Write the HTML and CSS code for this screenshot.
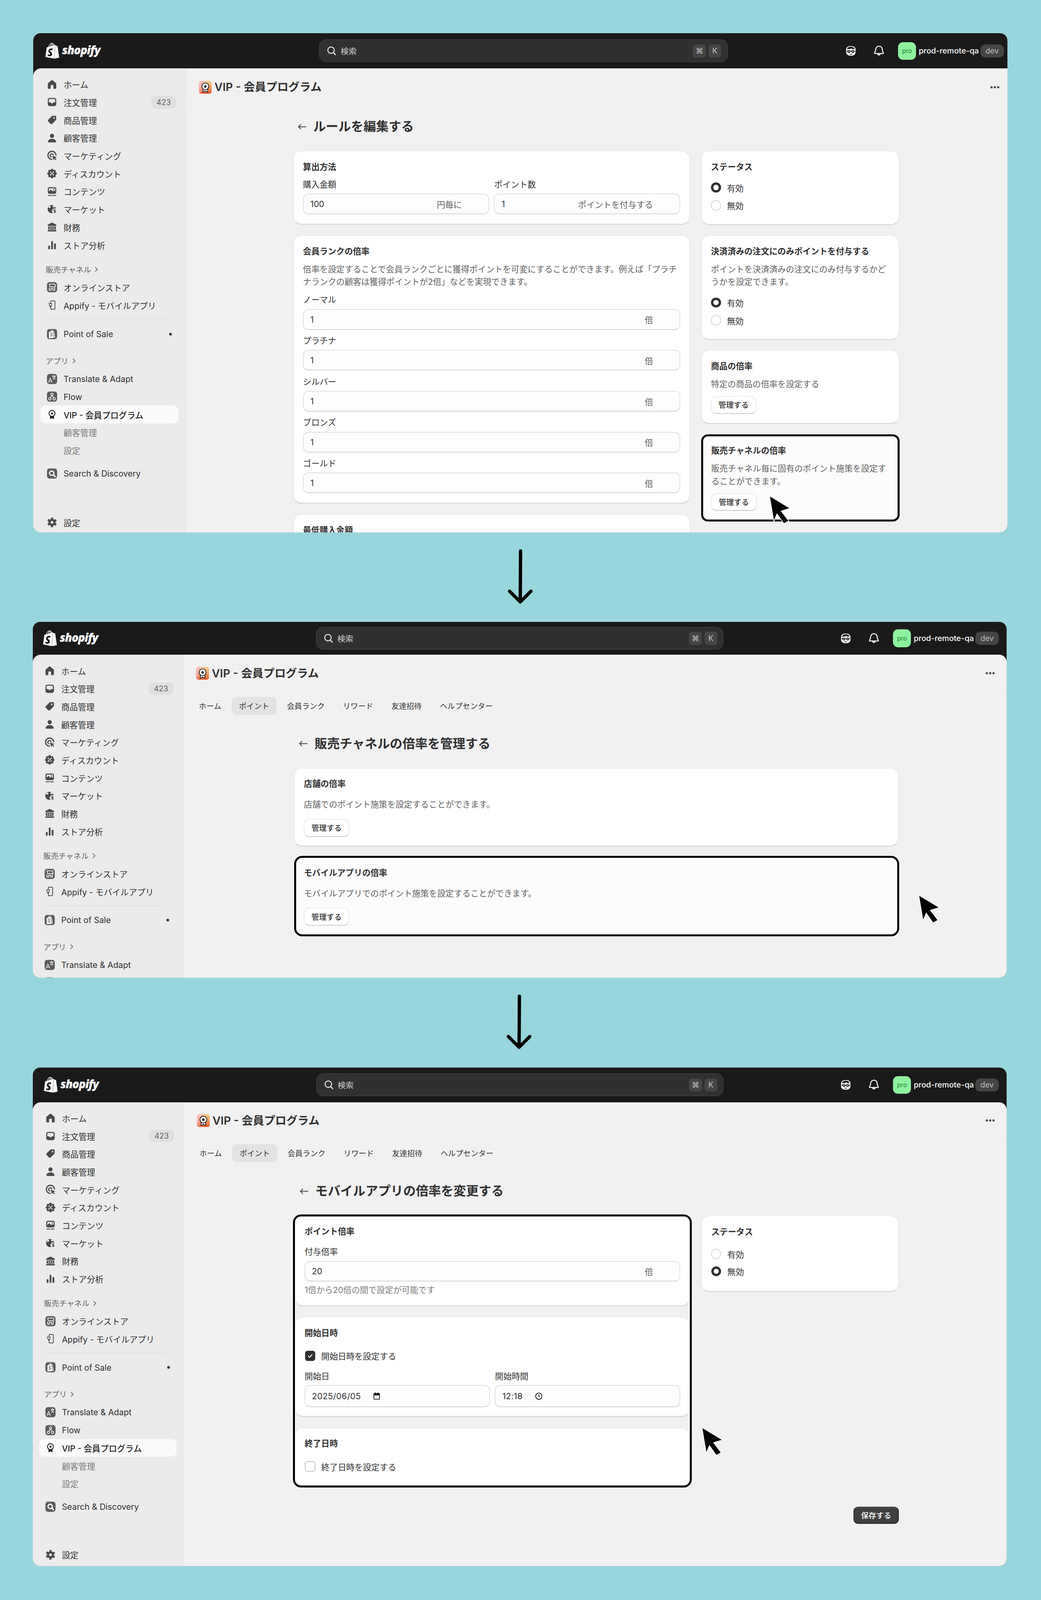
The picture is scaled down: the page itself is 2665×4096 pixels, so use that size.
FILE: index.html
```html
<!DOCTYPE html>
<html lang="ja">
<head>
<meta charset="utf-8">
<title>VIP - 会員プログラム</title>
<link rel="stylesheet" href="styles.css">
</head>
<body>
<svg class="sprite" aria-hidden="true">
  <defs>
    <linearGradient id="vipg" x1="0" y1="0" x2="0" y2="1"><stop offset="0" stop-color="#f9d08c"/><stop offset=".55" stop-color="#f29a5c"/><stop offset="1" stop-color="#e5562a"/></linearGradient>
    <linearGradient id="vipp" x1="0" y1="0" x2="1" y2=".4"><stop offset="0" stop-color="#f9b9d0"/><stop offset=".6" stop-color="#f9b9d0" stop-opacity="0"/></linearGradient>
  </defs>
  <symbol id="i-home" viewBox="0 0 20 20"><path d="M10.900 3.400a1.400 1.400 0 0 0-1.800 0L4 7.700A2 2 0 0 0 3.300 9.200V15a2 2 0 0 0 2 2h1.600a.9.9 0 0 0 .9-.9V13a2.200 2.200 0 0 1 4.400 0v3.100a.9.9 0 0 0 .9.900h1.600a2 2 0 0 0 2-2V9.200a2 2 0 0 0-.7-1.500Z"/></symbol>
  <symbol id="i-orders" viewBox="0 0 20 20"><path fill-rule="evenodd" d="M6.300 3.500h7.400a3 3 0 0 1 3 3v7a3 3 0 0 1-3 3H6.300a3 3 0 0 1-3-3v-7a3 3 0 0 1 3-3ZM5 10.500h2.400c.6 0 1 .4 1.200.9.300.5.800.8 1.400.8s1.100-.3 1.400-.8c.2-.5.600-.9 1.200-.9H15v-4a1.200 1.200 0 0 0-1.200-1.200H6.200A1.200 1.200 0 0 0 5 6.500Z"/></symbol>
  <symbol id="i-tag" viewBox="0 0 20 20"><path fill-rule="evenodd" d="M11 3.400h4.100a1.500 1.500 0 0 1 1.500 1.500V9a2 2 0 0 1-.6 1.400l-5.600 5.600a2 2 0 0 1-2.800 0L4 12.400a2 2 0 0 1 0-2.800L9.600 4a2 2 0 0 1 1.400-.6ZM13.200 8.100a1.300 1.300 0 1 0 0-2.600 1.300 1.300 0 0 0 0 2.600Z"/></symbol>
  <symbol id="i-person" viewBox="0 0 20 20"><circle cx="10" cy="6.600" r="3.300"/><path d="M3.700 16c0-2.800 2.800-4.700 6.300-4.700s6.300 1.900 6.300 4.700c0 .6-.4 1-.9 1H4.600a.9.900 0 0 1-.9-1Z"/></symbol>
  <symbol id="i-target" viewBox="0 0 20 20"><path d="M16.300 9.200A6.400 6.400 0 1 0 9.400 16.100" fill="none" stroke="currentColor" stroke-width="1.900" stroke-linecap="round"/><path d="M12.200 9.600A2.600 2.600 0 1 0 9.200 12.500" fill="none" stroke="currentColor" stroke-width="1.700"/><path d="M10.200 10.200 17.500 12.600 14.900 14 17 16.400 16 17.400 13.700 15 12.500 17.600Z"/></symbol>
  <symbol id="i-discount" viewBox="0 0 20 20"><circle cx="10" cy="10" r="5.800"/><g><circle cx="10" cy="4.500" r="2"/><circle cx="13.900" cy="6.100" r="2"/><circle cx="15.500" cy="10" r="2"/><circle cx="13.900" cy="13.900" r="2"/><circle cx="10" cy="15.500" r="2"/><circle cx="6.100" cy="13.900" r="2"/><circle cx="4.500" cy="10" r="2"/><circle cx="6.100" cy="6.100" r="2"/></g><path d="M12.600 7.400 7.400 12.600" stroke="#ebebeb" stroke-width="1.500" stroke-linecap="round"/><circle cx="7.900" cy="7.900" r="1.100" fill="#ebebeb"/><circle cx="12.100" cy="12.100" r="1.100" fill="#ebebeb"/></symbol>
  <symbol id="i-content" viewBox="0 0 20 20"><rect x="3.300" y="3.300" width="13.400" height="10.400" rx="2.600"/><path d="M5 10V6.200A1.200 1.200 0 0 1 6.200 5h7.600A1.200 1.200 0 0 1 15 6.200V10l-2-1.600-2 1.400-2.900-3Z" fill="#ebebeb"/><circle cx="12.600" cy="6.900" r=".9"/><path d="M4.200 16.300h4.800M11 16.300h4.800" stroke="currentColor" stroke-width="1.400" stroke-linecap="round"/></symbol>
  <symbol id="i-market" viewBox="0 0 20 20"><circle cx="9.500" cy="10" r="6.500"/><path d="M7 4.800c1.500 1 1.200 2.400-.2 3.100C5.500 8.500 4.500 8 4 7.200 4.800 6 5.800 5.200 7 4.800ZM11.500 4c1.500.4 2.700 1.300 3.400 2.500l-2.400 1.200c-1.200-.8-1.800-2.200-1-3.700Z" fill="#ebebeb"/><circle cx="14.300" cy="13.200" r="4.300" fill="#ebebeb"/><path d="M16.100 11.700c-.5-.8-3.100-.9-3.300.3-.2 1.500 3.300 1 3.100 2.500-.2 1.200-2.800 1.100-3.500.2M14.400 10.200v6.200" fill="none" stroke="currentColor" stroke-width="1"/></symbol>
  <symbol id="i-finance" viewBox="0 0 20 20"><path d="M9.300 3.200a1.600 1.600 0 0 1 1.400 0l5.400 2.700c.5.200.7.600.7 1.100V8.100H3.200V7c0-.5.200-.9.700-1.100Z"/><path fill-rule="evenodd" d="M4 9.100h12v4.800H4ZM6.200 10.300v2.400H7.600v-2.400ZM9.300 10.300v2.400h1.400v-2.400ZM12.400 10.300v2.400h1.400v-2.400Z"/><rect x="3.200" y="14.600" width="13.600" height="2.400" rx=".6"/></symbol>
  <symbol id="i-analytics" viewBox="0 0 20 20"><rect x="4" y="10.800" width="2.800" height="6.200" rx="1.400"/><rect x="8.600" y="3.800" width="2.800" height="13.200" rx="1.400"/><rect x="13.200" y="7.400" width="2.800" height="9.600" rx="1.400"/></symbol>
  <symbol id="i-store" viewBox="0 0 20 20"><rect x="2" y="2" width="16" height="16" rx="4"/><path d="M5.600 5.200h8.800l1.100 3.200c0 1.400-1.900 1.700-2.750.6-.8 1.100-2.700 1.100-3.500 0-.8 1.100-2.750.8-2.750-.6Z" fill="none" stroke="#fff" stroke-width="1.100" stroke-linejoin="round"/><path d="M5.700 10.500v4.300h2.700v-2.800h3.200v2.800h2.700v-4.300" fill="none" stroke="#fff" stroke-width="1.100"/></symbol>
  <symbol id="i-phone" viewBox="0 0 20 20"><rect x="7.800" y="3.200" width="6.800" height="13.400" rx="1.300" fill="none" stroke="currentColor" stroke-width="1.200"/><path d="M5.200 7.400H9.800L8.900 11H6ZM5 6.400l.4 1M6.200 12.400h2.500" fill="#ebebeb" stroke="currentColor" stroke-width="1"/></symbol>
  <symbol id="i-pos" viewBox="0 0 20 20"><rect x="2" y="2" width="16" height="16" rx="4"/><path d="M5.200 6.800 12 4.700l1.100.3 1.700 10.700-9.600 .9Z" fill="#fff"/><path d="M7.800 6.200c0-1.700 1-2.500 2-2.500s1.700.8 1.700 2" fill="none" stroke="#fff" stroke-width=".7"/><path d="M12.100 4.700 13 15.900" stroke="#5c5c5c" stroke-width=".7"/><path d="M10.500 8.900c-.6-.8-2.800-.6-2.800.7 0 1.500 2.700 1 2.700 2.600 0 1.200-2.300 1.300-3 .4" fill="none" stroke="#5c5c5c" stroke-width="1"/></symbol>
  <symbol id="i-translate" viewBox="0 0 20 20"><rect x="2" y="2" width="16" height="16" rx="4"/><path d="M4.300 15.700 7.200 8.600l2.900 7.100M5.300 13.400h3.800M10.300 5.600h5.700M13.100 4v1.600M11.300 5.600c.6 2.400 2 4.100 4.200 4.800M15 5.600c-.5 2.300-1.800 4-3.800 4.800" fill="none" stroke="#fff" stroke-width=".9"/></symbol>
  <symbol id="i-flow" viewBox="0 0 20 20"><rect x="2" y="2" width="16" height="16" rx="4"/><path d="M10 8 7.400 12M10 8l2.600 4" stroke="#fff" stroke-width="1"/><circle cx="10" cy="6.400" r="1.800" fill="#5c5c5c" stroke="#fff" stroke-width="1"/><circle cx="6.600" cy="13.500" r="1.800" fill="#5c5c5c" stroke="#fff" stroke-width="1"/><circle cx="13.400" cy="13.500" r="1.800" fill="#5c5c5c" stroke="#fff" stroke-width="1"/></symbol>
  <symbol id="i-vip" viewBox="0 0 20 20"><path d="M6.900 11.500v5.700l3.100-1.700 3.100 1.700v-5.700Z" fill="#1a1a1a"/><circle cx="10" cy="8.200" r="4.700" fill="#fafafa" stroke="#1a1a1a" stroke-width="1.300"/><path d="m10 6 .7 1.500 1.600.2-1.200 1.100.3 1.600-1.400-.8-1.400.8.300-1.600-1.200-1.100 1.600-.2Z" fill="#1a1a1a"/></symbol>
  <symbol id="i-searchapp" viewBox="0 0 20 20"><rect x="2" y="2" width="16" height="16" rx="4"/><circle cx="9.500" cy="9.500" r="3.400" fill="none" stroke="#fff" stroke-width="1.900"/><path d="m12.100 12.100 2.800 2.800" stroke="#fff" stroke-width="2" stroke-linecap="round"/></symbol>
  <symbol id="i-gear" viewBox="0 0 20 20"><circle cx="10" cy="10" r="5.600"/><circle cx="10" cy="10" r="6" fill="none" stroke="currentColor" stroke-width="3.200" stroke-dasharray="3.300 2.983" stroke-dashoffset="1.650" transform="rotate(-90 10 10)"/><circle cx="10" cy="10" r="2.100" fill="#ebebeb"/></symbol>
  <symbol id="i-vipapp" viewBox="0 0 40 40"><rect width="40" height="40" rx="8" fill="url(#vipg)"/><rect width="40" height="40" rx="8" fill="url(#vipp)"/><path d="M13 23v12l7-3.500 7 3.500V23Z" fill="#fff" stroke="#111" stroke-width="2"/><circle cx="20" cy="17" r="10.500" fill="#fff" stroke="#111" stroke-width="2.200"/><path d="m20 11.500 1.700 3.500 3.800.5-2.800 2.600.7 3.800-3.400-1.800-3.400 1.800.7-3.800-2.800-2.600 3.800-.5Z" fill="#111"/></symbol>
  <symbol id="i-shopify" viewBox="0 0 24 24"><path d="M15.337 23.979l7.216-1.561s-2.604-17.613-2.625-17.73c-.018-.116-.114-.192-.211-.192s-1.929-.136-1.929-.136-1.275-1.274-1.439-1.411c-.045-.037-.075-.057-.121-.074l-.914 21.104h.023zM11.71 11.305s-.81-.424-1.774-.424c-1.447 0-1.504.906-1.504 1.141 0 1.232 3.24 1.715 3.24 4.629 0 2.295-1.44 3.76-3.406 3.76-2.354 0-3.54-1.465-3.54-1.465l.646-2.086s1.245 1.066 2.28 1.066c.675 0 .975-.545.975-.932 0-1.619-2.654-1.694-2.654-4.359-.034-2.237 1.571-4.416 4.827-4.416 1.257 0 1.875.361 1.875.361l-.945 2.715-.02.01zM11.17.83c.136 0 .271.038.405.135-.984.465-2.064 1.639-2.508 3.992-.656.213-1.293.405-1.889.578C7.697 3.75 8.951.84 11.17.84V.83zm1.235 2.949v.135c-.754.232-1.583.484-2.394.736.466-1.777 1.333-2.645 2.085-2.971.193.501.309 1.176.309 2.1zm.539-2.234c.694.074 1.141.867 1.429 1.755-.349.114-.735.231-1.158.366v-.252c0-.752-.096-1.371-.271-1.871v.002zm2.992 1.289c-.02 0-.06.021-.078.021s-.289.075-.714.21c-.423-1.233-1.176-2.37-2.508-2.37h-.115C12.135.209 11.669 0 11.265 0 8.159 0 6.675 3.877 6.21 5.846c-1.194.365-2.063.636-2.16.674-.675.213-.694.232-.772.87-.075.462-1.83 14.063-1.83 14.063L15.009 24l.927-21.166z"/></symbol>
  <symbol id="i-find" viewBox="0 0 20 20"><circle cx="9" cy="9" r="6.500" fill="none" stroke="currentColor" stroke-width="2"/><path d="m13.700 13.700 4 4.300" stroke="currentColor" stroke-width="2.200" stroke-linecap="round"/></symbol>
  <symbol id="i-face" viewBox="0 0 20 20"><rect x="2.500" y="2.500" width="15" height="15" rx="5.500" fill="#fff"/><path d="M3.500 9c0-4 2-6 6.500-6s6.500 2 6.500 6l-2-1.600-2 .8-1.500-1.700-2.500 1.400-2.500-.5Z" fill="#1a1a1a" stroke="#fff" stroke-width=".9"/><path d="M3 10.400h14" stroke="#1a1a1a" stroke-width="1"/><circle cx="7" cy="11" r="2.200" fill="#1a1a1a"/><circle cx="13" cy="11" r="2.200" fill="#1a1a1a"/><circle cx="7" cy="11" r=".9" fill="#fff"/><circle cx="13" cy="11" r=".9" fill="#fff"/><path d="M8 14.700c1.200.9 2.800.9 4 0" fill="none" stroke="#1a1a1a" stroke-width="1"/></symbol>
  <symbol id="i-bell" viewBox="0 0 20 20"><path d="M10 2.600a5.200 5.200 0 0 0-5.200 5.200c0 3.400-1.600 4.600-1.800 5.300-.2.600.2 1.100.8 1.100h12.400c.6 0 1-.5.8-1.100-.2-.7-1.800-1.900-1.800-5.300A5.200 5.200 0 0 0 10 2.600Z" fill="none" stroke="currentColor" stroke-width="1.500" stroke-linejoin="round"/><path d="M8.200 14.500c0 2.700 3.600 2.700 3.600 0" fill="none" stroke="currentColor" stroke-width="1.500"/></symbol>
  <symbol id="i-back" viewBox="0 0 28 20"><path d="M26 10H3.500M10.500 3 3.500 10l7 7" fill="none" stroke="currentColor" stroke-width="2.600" stroke-linecap="round" stroke-linejoin="round"/></symbol>
  <symbol id="i-chev" viewBox="0 0 12 18"><path d="m2.500 3 6 6-6 6" fill="none" stroke="currentColor" stroke-width="2.200" stroke-linecap="round" stroke-linejoin="round"/></symbol>
  <symbol id="i-cal" viewBox="0 0 22 22"><path fill-rule="evenodd" d="M3 2h16a1.500 1.500 0 0 1 1.500 1.500v16A1.500 1.500 0 0 1 19 21H3a1.500 1.500 0 0 1-1.500-1.500v-16A1.500 1.500 0 0 1 3 2Zm.5 6.500v10.500h15V8.500Z"/><path d="M6 0h2.400v3H6zM13.600 0H16v3h-2.400z"/></symbol>
  <symbol id="i-clock" viewBox="0 0 22 22"><circle cx="11" cy="11" r="9.500" fill="none" stroke="currentColor" stroke-width="2.200"/><path d="M11 5.500V11l4 2.500" fill="none" stroke="currentColor" stroke-width="2.200"/></symbol>
  <symbol id="i-check" viewBox="0 0 20 20"><path d="m5.500 10.500 3 3 6-7" fill="none" stroke="#fff" stroke-width="2.200" stroke-linecap="round" stroke-linejoin="round"/></symbol>
  <symbol id="i-cursor" viewBox="-6 -6 72 92"><path d="M0 0 58 35 32 43 55 73 42 80 21 50 12 71Z" fill="#000" stroke="#fff" stroke-width="4" stroke-linejoin="miter" paint-order="stroke"/></symbol>
  <symbol id="i-arrow" viewBox="0 0 84 168"><path d="M43 5 42 158M10 126l32 32 32-32" fill="none" stroke="#000" stroke-width="10" stroke-linecap="round" stroke-linejoin="round"/></symbol>
</svg>

<div class="page">

<!-- ============ 1 ============ -->
<section class="win win--a">
  <header class="topbar">
    <div class="logo"><svg class="logo-bag"><use href="#i-shopify"/></svg><span class="logo-word">shopify</span></div>
    <div class="search"><svg class="search-ico"><use href="#i-find"/></svg><span class="search-text">検索</span><span class="kbd">⌘</span><span class="kbd">K</span></div>
    <div class="actions"><svg class="act-face"><use href="#i-face"/></svg><svg class="act-bell"><use href="#i-bell"/></svg><span class="pro">pro</span><span class="shop-name">prod-remote-qa</span><span class="dev">dev</span></div>
  </header>
  <div class="body">
    <nav class="side">
      <a class="row"><svg class="ico"><use href="#i-home"/></svg>ホーム</a>
      <a class="row"><svg class="ico"><use href="#i-orders"/></svg>注文管理<span class="count">423</span></a>
      <a class="row"><svg class="ico"><use href="#i-tag"/></svg>商品管理</a>
      <a class="row"><svg class="ico"><use href="#i-person"/></svg>顧客管理</a>
      <a class="row"><svg class="ico"><use href="#i-target"/></svg>マーケティング</a>
      <a class="row"><svg class="ico"><use href="#i-discount"/></svg>ディスカウント</a>
      <a class="row"><svg class="ico"><use href="#i-content"/></svg>コンテンツ</a>
      <a class="row"><svg class="ico"><use href="#i-market"/></svg>マーケット</a>
      <a class="row"><svg class="ico"><use href="#i-finance"/></svg>財務</a>
      <a class="row"><svg class="ico"><use href="#i-analytics"/></svg>ストア分析</a>
      <div class="side-head side-head--first">販売チャネル<svg class="chev"><use href="#i-chev"/></svg></div>
      <a class="row"><svg class="ico ico--app"><use href="#i-store"/></svg>オンラインストア</a>
      <a class="row"><svg class="ico"><use href="#i-phone"/></svg>Appify - モバイルアプリ</a>
      <hr class="side-rule">
      <a class="row"><svg class="ico ico--app"><use href="#i-pos"/></svg>Point of Sale<span class="pin"></span></a>
      <div class="side-head side-head--apps">アプリ<svg class="chev"><use href="#i-chev"/></svg></div>
      <a class="row"><svg class="ico ico--app"><use href="#i-translate"/></svg>Translate &amp; Adapt</a>
      <a class="row"><svg class="ico ico--app"><use href="#i-flow"/></svg>Flow</a>
      <a class="row row--on"><svg class="ico"><use href="#i-vip"/></svg>VIP - 会員プログラム</a>
      <a class="row row--sub">顧客管理</a>
      <a class="row row--sub">設定</a>
      <a class="row row--search"><svg class="ico ico--app"><use href="#i-searchapp"/></svg>Search &amp; Discovery</a>
      <a class="row row--settings"><svg class="ico"><use href="#i-gear"/></svg>設定</a>
    </nav>
    <main class="main">
      <div class="apphead"><svg class="vip"><use href="#i-vipapp"/></svg><h1 class="app-title">VIP - 会員プログラム</h1><svg class="more" viewBox="0 0 28 8"><circle cx="4" cy="4" r="3.300"/><circle cx="14" cy="4" r="3.300"/><circle cx="24" cy="4" r="3.300"/></svg></div>
      <div class="pagehead"><svg class="back"><use href="#i-back"/></svg><h2 class="page-title">ルールを編集する</h2></div>
      <div class="cols">
        <div class="col-l">
          <section class="card">
            <h3 class="card-title">算出方法</h3>
            <div class="pair">
              <div class="field"><label class="lbl">購入金額</label><div class="input">100<span class="suf">円毎に</span></div></div>
              <div class="field"><label class="lbl">ポイント数</label><div class="input">1<span class="suf">ポイントを付与する</span></div></div>
            </div>
          </section>
          <section class="card">
            <h3 class="card-title">会員ランクの倍率</h3>
            <p class="desc">倍率を設定することで会員ランクごとに獲得ポイントを可変にすることができます。例えば「プラチナランクの顧客は獲得ポイントが2倍」などを実現できます。</p>
            <div class="field field--rank"><label class="lbl">ノーマル</label><div class="input">1<span class="suf">倍</span></div></div>
            <div class="field field--rank"><label class="lbl">プラチナ</label><div class="input">1<span class="suf">倍</span></div></div>
            <div class="field field--rank"><label class="lbl">シルバー</label><div class="input">1<span class="suf">倍</span></div></div>
            <div class="field field--rank"><label class="lbl">ブロンズ</label><div class="input">1<span class="suf">倍</span></div></div>
            <div class="field field--rank"><label class="lbl">ゴールド</label><div class="input">1<span class="suf">倍</span></div></div>
          </section>
          <section class="card"><h3 class="card-title">最低購入金額</h3></section>
        </div>
        <div class="col-r">
          <section class="card">
            <h3 class="card-title">ステータス</h3>
            <div class="radios">
              <div class="radio"><span class="dot dot--on"></span>有効</div>
              <div class="radio"><span class="dot"></span>無効</div>
            </div>
          </section>
          <section class="card">
            <h3 class="card-title">決済済みの注文にのみポイントを付与する</h3>
            <p class="desc">ポイントを決済済みの注文にのみ付与するかどうかを設定できます。</p>
            <div class="radios">
              <div class="radio"><span class="dot dot--on"></span>有効</div>
              <div class="radio"><span class="dot"></span>無効</div>
            </div>
          </section>
          <section class="card">
            <h3 class="card-title">商品の倍率</h3>
            <p class="desc">特定の商品の倍率を設定する</p>
            <button class="btn">管理する</button>
          </section>
          <section class="card card--hl">
            <h3 class="card-title">販売チャネルの倍率</h3>
            <p class="desc">販売チャネル毎に固有のポイント施策を設定することができます。</p>
            <button class="btn">管理する</button>
          </section>
        </div>
      </div>
    </main>
  </div>
  <svg class="cursor"><use href="#i-cursor"/></svg>
</section>

<div class="flow-arrow"><svg class="arrow"><use href="#i-arrow"/></svg></div>

<!-- ============ 2 ============ -->
<section class="win win--b">
  <header class="topbar">
    <div class="logo"><svg class="logo-bag"><use href="#i-shopify"/></svg><span class="logo-word">shopify</span></div>
    <div class="search"><svg class="search-ico"><use href="#i-find"/></svg><span class="search-text">検索</span><span class="kbd">⌘</span><span class="kbd">K</span></div>
    <div class="actions"><svg class="act-face"><use href="#i-face"/></svg><svg class="act-bell"><use href="#i-bell"/></svg><span class="pro">pro</span><span class="shop-name">prod-remote-qa</span><span class="dev">dev</span></div>
  </header>
  <div class="body">
    <nav class="side">
      <a class="row"><svg class="ico"><use href="#i-home"/></svg>ホーム</a>
      <a class="row"><svg class="ico"><use href="#i-orders"/></svg>注文管理<span class="count">423</span></a>
      <a class="row"><svg class="ico"><use href="#i-tag"/></svg>商品管理</a>
      <a class="row"><svg class="ico"><use href="#i-person"/></svg>顧客管理</a>
      <a class="row"><svg class="ico"><use href="#i-target"/></svg>マーケティング</a>
      <a class="row"><svg class="ico"><use href="#i-discount"/></svg>ディスカウント</a>
      <a class="row"><svg class="ico"><use href="#i-content"/></svg>コンテンツ</a>
      <a class="row"><svg class="ico"><use href="#i-market"/></svg>マーケット</a>
      <a class="row"><svg class="ico"><use href="#i-finance"/></svg>財務</a>
      <a class="row"><svg class="ico"><use href="#i-analytics"/></svg>ストア分析</a>
      <div class="side-head side-head--first">販売チャネル<svg class="chev"><use href="#i-chev"/></svg></div>
      <a class="row"><svg class="ico ico--app"><use href="#i-store"/></svg>オンラインストア</a>
      <a class="row"><svg class="ico"><use href="#i-phone"/></svg>Appify - モバイルアプリ</a>
      <hr class="side-rule">
      <a class="row"><svg class="ico ico--app"><use href="#i-pos"/></svg>Point of Sale<span class="pin"></span></a>
      <div class="side-head side-head--apps">アプリ<svg class="chev"><use href="#i-chev"/></svg></div>
      <a class="row"><svg class="ico ico--app"><use href="#i-translate"/></svg>Translate &amp; Adapt</a>
      <a class="row"><svg class="ico ico--app"><use href="#i-flow"/></svg></a>
    </nav>
    <main class="main">
      <div class="apphead"><svg class="vip"><use href="#i-vipapp"/></svg><h1 class="app-title">VIP - 会員プログラム</h1><svg class="more" viewBox="0 0 28 8"><circle cx="4" cy="4" r="3.300"/><circle cx="14" cy="4" r="3.300"/><circle cx="24" cy="4" r="3.300"/></svg></div>
      <div class="tabs"><a class="tab">ホーム</a><a class="tab tab--on">ポイント</a><a class="tab">会員ランク</a><a class="tab">リワード</a><a class="tab">友達招待</a><a class="tab">ヘルプセンター</a></div>
      <div class="pagehead"><svg class="back"><use href="#i-back"/></svg><h2 class="page-title">販売チャネルの倍率を管理する</h2></div>
      <div class="wide-stack">
        <section class="card card--wide">
          <h3 class="card-title">店舗の倍率</h3>
          <p class="desc">店舗でのポイント施策を設定することができます。</p>
          <button class="btn">管理する</button>
        </section>
        <section class="card card--wide card--hl">
          <h3 class="card-title">モバイルアプリの倍率</h3>
          <p class="desc">モバイルアプリでのポイント施策を設定することができます。</p>
          <button class="btn">管理する</button>
        </section>
      </div>
    </main>
  </div>
  <svg class="cursor"><use href="#i-cursor"/></svg>
</section>

<div class="flow-arrow flow-arrow--second"><svg class="arrow"><use href="#i-arrow"/></svg></div>

<!-- ============ 3 ============ -->
<section class="win win--c">
  <header class="topbar">
    <div class="logo"><svg class="logo-bag"><use href="#i-shopify"/></svg><span class="logo-word">shopify</span></div>
    <div class="search"><svg class="search-ico"><use href="#i-find"/></svg><span class="search-text">検索</span><span class="kbd">⌘</span><span class="kbd">K</span></div>
    <div class="actions"><svg class="act-face"><use href="#i-face"/></svg><svg class="act-bell"><use href="#i-bell"/></svg><span class="pro">pro</span><span class="shop-name">prod-remote-qa</span><span class="dev">dev</span></div>
  </header>
  <div class="body">
    <nav class="side">
      <a class="row"><svg class="ico"><use href="#i-home"/></svg>ホーム</a>
      <a class="row"><svg class="ico"><use href="#i-orders"/></svg>注文管理<span class="count">423</span></a>
      <a class="row"><svg class="ico"><use href="#i-tag"/></svg>商品管理</a>
      <a class="row"><svg class="ico"><use href="#i-person"/></svg>顧客管理</a>
      <a class="row"><svg class="ico"><use href="#i-target"/></svg>マーケティング</a>
      <a class="row"><svg class="ico"><use href="#i-discount"/></svg>ディスカウント</a>
      <a class="row"><svg class="ico"><use href="#i-content"/></svg>コンテンツ</a>
      <a class="row"><svg class="ico"><use href="#i-market"/></svg>マーケット</a>
      <a class="row"><svg class="ico"><use href="#i-finance"/></svg>財務</a>
      <a class="row"><svg class="ico"><use href="#i-analytics"/></svg>ストア分析</a>
      <div class="side-head side-head--first">販売チャネル<svg class="chev"><use href="#i-chev"/></svg></div>
      <a class="row"><svg class="ico ico--app"><use href="#i-store"/></svg>オンラインストア</a>
      <a class="row"><svg class="ico"><use href="#i-phone"/></svg>Appify - モバイルアプリ</a>
      <hr class="side-rule">
      <a class="row"><svg class="ico ico--app"><use href="#i-pos"/></svg>Point of Sale<span class="pin"></span></a>
      <div class="side-head side-head--apps">アプリ<svg class="chev"><use href="#i-chev"/></svg></div>
      <a class="row"><svg class="ico ico--app"><use href="#i-translate"/></svg>Translate &amp; Adapt</a>
      <a class="row"><svg class="ico ico--app"><use href="#i-flow"/></svg>Flow</a>
      <a class="row row--on"><svg class="ico"><use href="#i-vip"/></svg>VIP - 会員プログラム</a>
      <a class="row row--sub">顧客管理</a>
      <a class="row row--sub">設定</a>
      <a class="row row--search"><svg class="ico ico--app"><use href="#i-searchapp"/></svg>Search &amp; Discovery</a>
      <a class="row row--settings"><svg class="ico"><use href="#i-gear"/></svg>設定</a>
    </nav>
    <main class="main">
      <div class="apphead"><svg class="vip"><use href="#i-vipapp"/></svg><h1 class="app-title">VIP - 会員プログラム</h1><svg class="more" viewBox="0 0 28 8"><circle cx="4" cy="4" r="3.300"/><circle cx="14" cy="4" r="3.300"/><circle cx="24" cy="4" r="3.300"/></svg></div>
      <div class="tabs"><a class="tab">ホーム</a><a class="tab tab--on">ポイント</a><a class="tab">会員ランク</a><a class="tab">リワード</a><a class="tab">友達招待</a><a class="tab">ヘルプセンター</a></div>
      <div class="pagehead"><svg class="back"><use href="#i-back"/></svg><h2 class="page-title">モバイルアプリの倍率を変更する</h2></div>
      <div class="cols">
        <div class="col-l">
          <div class="hlbox">
            <section class="card card--a">
              <h3 class="card-title">ポイント倍率</h3>
              <div class="field field--gap"><label class="lbl">付与倍率</label><div class="input input--60">20<span class="suf">倍</span></div></div>
              <p class="help">1倍から20倍の間で設定が可能です</p>
            </section>
            <section class="card card--b">
              <h3 class="card-title">開始日時</h3>
              <div class="checkrow"><span class="cbx cbx--on"><svg class="tick"><use href="#i-check"/></svg></span>開始日時を設定する</div>
              <div class="pair pair--dates">
                <div class="field"><label class="lbl">開始日</label><div class="input input--64">2025/06/05<svg class="picker"><use href="#i-cal"/></svg></div></div>
                <div class="field"><label class="lbl">開始時間</label><div class="input input--64">12:18<svg class="picker picker--time"><use href="#i-clock"/></svg></div></div>
              </div>
            </section>
            <section class="card card--c">
              <h3 class="card-title">終了日時</h3>
              <div class="checkrow"><span class="cbx"></span>終了日時を設定する</div>
            </section>
          </div>
        </div>
        <div class="col-r">
          <section class="card card--status">
            <h3 class="card-title">ステータス</h3>
            <div class="radios">
              <div class="radio"><span class="dot"></span>有効</div>
              <div class="radio"><span class="dot dot--on"></span>無効</div>
            </div>
          </section>
        </div>
      </div>
      <div class="savebar"><button class="btn-save">保存する</button></div>
    </main>
  </div>
  <svg class="cursor"><use href="#i-cursor"/></svg>
</section>

</div>
</body>
</html>
```
FILE: styles.css
```css
html, body { margin: 0; padding: 0; background: #99d5dc; }
.sprite { position: absolute; width: 0; height: 0; overflow: hidden; }
.page {
  zoom: 0.854;
  width: 3120px;
  height: 4796px;
  padding-top: 100px;
  box-sizing: border-box;
  background: #99d5dc;
  font-family: Inter, "Noto Sans CJK JP", sans-serif;
  font-size: 25px;
  color: #303030;
  overflow: hidden;
}
h1, h2, h3, p { margin: 0; }
button { font-family: inherit; }
svg { display: block; flex: none; }

/* windows */
.win {
  position: relative;
  width: 2920px;
  border-radius: 22px;
  background: #1a1a1a;
  overflow: hidden;
  display: flex;
  flex-direction: column;
}
.win--a {
  margin-left: 100px; height: 1496px;
  --bar: 105px; --logo-l: 37px; --search-l: 857px; --search-w: 1224px; --act-r: 11px; --side-w: 458px;
  --nav-top: 21px; --nav-l: 22px; --body-tr: 0; --row-l: 15px; --nav-bottom: 3px; --more-r: 24px;
}
.win--b {
  margin-left: 98px; height: 1067px;
  --bar: 99px; --logo-l: 32px; --search-l: 849px; --search-w: 1222px; --act-r: 24px; --side-w: 452px;
  --nav-top: 21px; --nav-l: 17px; --body-tr: 22px; --row-l: 15px; --nav-bottom: 0px; --more-r: 36px;
}
.win--c {
  margin-left: 98px; height: 1495px;
  --bar: 104px; --logo-l: 34px; --search-l: 850px; --search-w: 1221px; --act-r: 24px; --side-w: 454px;
  --nav-top: 21px; --nav-l: 19px; --body-tr: 22px; --row-l: 15px; --nav-bottom: 8px; --more-r: 36px;
}

/* flow arrows between windows */
.flow-arrow { height: 268px; display: flex; align-items: center; justify-content: center; }
.flow-arrow--second { height: 269px; padding-right: 8px; }
.arrow { width: 84px; height: 168px; }

/* top bar */
.topbar {
  height: var(--bar);
  flex: none;
  display: flex;
  align-items: center;
  padding-left: var(--logo-l);
  padding-right: var(--act-r);
  position: relative;
}
.logo { display: flex; align-items: center; gap: 5px; width: 164px; flex: none; color: #fff; }
.logo-bag { width: 47px; height: 47px; fill: #fff; margin-left: -3px; }
.logo-word {
  font-family: "Open Sans", sans-serif;
  font-style: italic;
  font-weight: 800;
  font-size: 34.500px;
  line-height: 40px;
  letter-spacing: -1.500px;
  padding-bottom: 5px;
}
.search {
  position: absolute;
  left: var(--search-l);
  width: var(--search-w);
  height: 68px;
  box-sizing: border-box;
  display: flex;
  align-items: center;
  gap: 8px;
  padding: 0 18px 0 21px;
  background: #303030;
  border: 2px solid #4a4a4a;
  border-radius: 21px;
  color: #d0d0d0;
  font-size: 24px;
}
.search-ico { width: 30px; height: 30px; color: #e3e3e3; }
.search-text { margin-right: auto; padding-left: 4px; }
.kbd {
  width: 38px; height: 39px;
  border-radius: 8px;
  background: #454545;
  color: #c4c4c4;
  display: flex; align-items: center; justify-content: center;
  font-size: 23px;
}
.actions { margin-left: auto; display: flex; align-items: center; color: #fff; }
.act-face { width: 38px; height: 38px; margin-right: 47px; }
.act-bell { width: 38px; height: 38px; margin-right: 38px; color: #fff; }
.pro {
  width: 54px; height: 53px;
  border-radius: 15px;
  background: #8df29d;
  color: #1f7a3c;
  font-size: 19px;
  display: flex; align-items: center; justify-content: center;
  margin-right: 8px;
}
.shop-name { width: 176px; font-size: 23.500px; font-weight: 500; white-space: nowrap; margin-right: 9px; }
.dev {
  width: 70px; height: 39px;
  border-radius: 14px;
  background: #454545;
  color: #bdbdbd;
  font-size: 23px;
  display: flex; align-items: center; justify-content: center;
}

/* body */
.body {
  flex: 1;
  min-height: 0;
  display: flex;
  background: #f1f1f1;
  border-radius: 24px var(--body-tr) 0 0;
  overflow: hidden;
}

/* sidebar */
.side {
  width: var(--side-w);
  flex: none;
  box-sizing: border-box;
  background: #ebebeb;
  padding: var(--nav-top) 23px var(--nav-bottom) var(--nav-l);
  display: flex;
  flex-direction: column;
  overflow: hidden;
}
.row {
  height: 53.500px;
  flex: none;
  display: flex;
  align-items: center;
  gap: 15.500px;
  padding: 0 7px 0 var(--row-l);
  border-radius: 16px;
  white-space: nowrap;
  color: #303030;
}
.ico { width: 38px; height: 38px; fill: #4a4a4a; color: #4a4a4a; }
.ico--app { fill: #5c5c5c; }
.count {
  margin-left: auto;
  width: 75px; height: 38px;
  border-radius: 14px;
  background: #e0e0e0;
  color: #616161;
  font-size: 23px;
  display: flex; align-items: center; justify-content: center;
}
.pin { margin-left: auto; margin-right: 13px; width: 8px; height: 8px; border-radius: 50%; background: #303030; }
.side-head {
  height: 53.500px;
  flex: none;
  display: flex;
  align-items: center;
  gap: 11px;
  padding-left: var(--row-l);
  color: #616161;
  font-size: 22.700px;
}
.side-head--first { margin-top: 20px; }
.side-head--apps { margin-top: 27px; }
.chev { width: 12px; height: 18px; color: #616161; }
.side-rule { border: 0; height: 2px; background: #e1e1e1; margin: 15px 10px 15px var(--row-l); flex: none; width: 365px; }
.win--a .side-rule { margin-bottom: 16.500px; }
.row--on { background: #fafafa; font-weight: 500; color: #1f1f1f; }
.row--sub { padding-left: calc(var(--row-l) + 53.500px); color: #7a7a7a; }
.row--search { margin-top: 16px; }
.row--settings { margin-top: auto; }

/* main */
.main { flex: 1; min-width: 0; display: flex; flex-direction: column; }
.apphead {
  height: 108px;
  flex: none;
  box-sizing: border-box;
  display: flex;
  align-items: center;
  border-bottom: 2px solid #e8e8e8;
  padding: 6px var(--more-r) 0 38px;
}
.win--b .apphead, .win--c .apphead { padding-top: 4px; }
.vip { width: 39px; height: 39px; margin-right: 8px; }
.app-title { font-size: 33.500px; font-weight: 600; line-height: 44px; color: #303030; white-space: nowrap; }
.more { width: 28px; height: 8px; margin-left: auto; fill: #4a4a4a; }

.tabs { display: flex; gap: 10.500px; margin-top: 18px; padding-left: 24px; height: 53.600px; flex: none; font-size: 22.700px; }
.tab { padding: 0 22px; border-radius: 14px; display: flex; align-items: center; white-space: nowrap; color: #303030; }
.tab--on { background: #e3e3e3; padding: 0 22.500px; margin: 0 -2px; }

.pagehead { display: flex; align-items: center; height: 50px; flex: none; margin-top: 42px; margin-bottom: 47px; }
.win--a .pagehead { padding-left: 333px; }
.win--b .pagehead { margin-top: 62px; margin-bottom: 48px; padding-left: 345px; }
.win--c .pagehead { margin-top: 62px; margin-bottom: 45px; padding-left: 345px; }
.back { width: 28px; height: 20px; color: #4a4a4a; margin-right: 20px; }
.page-title { font-size: 37.700px; font-weight: 600; line-height: 50px; color: #303030; white-space: nowrap; }

.cols { display: flex; align-items: flex-start; gap: 34px; flex: none; }
.win--a .cols { margin-left: 321px; }
.win--c .cols { margin-left: 326px; gap: 28px; }
.col-l { width: 1189px; display: flex; flex-direction: column; gap: 32.500px; flex: none; }
.win--c .col-l { width: 1196px; }
.col-r { width: 594px; display: flex; flex-direction: column; gap: 32px; flex: none; }
.win--c .col-r { width: 592px; padding-top: 3.500px; }

/* cards */
.card {
  box-sizing: border-box;
  background: #fff;
  border: 2px solid #e3e3e3;
  border-bottom-color: #c9c9c9;
  border-radius: 24px;
  box-shadow: 0 2px 3px rgba(0, 0, 0, .06);
  padding: 29px 28px;
  position: relative;
}
.card-title { font-size: 25px; font-weight: 600; line-height: 36px; color: #303030; white-space: nowrap; }
.desc { margin-top: 17px; line-height: 38px; color: #616161; }
.lbl { display: block; line-height: 36px; color: #303030; }
.input {
  margin-top: 10px;
  height: 61px;
  box-sizing: border-box;
  display: flex;
  align-items: center;
  padding: 0 80px 0 21px;
  background: #fdfdfd;
  border: 2px solid #c6c6c6;
  border-bottom-color: #adadad;
  border-radius: 16px;
  color: #303030;
}
.suf { margin-left: auto; color: #616161; }
.pair { display: flex; gap: 16px; margin-top: 17px; }
.pair .field { flex: 1 1 0; min-width: 0; }
.field--rank { margin-top: 15.600px; }
.desc + .field--rank { margin-top: 17px; }
.radios { margin-top: 26px; margin-bottom: 9px; display: flex; flex-direction: column; gap: 17.500px; }
.desc + .radios { margin-top: 25px; }
.radio { display: flex; align-items: center; gap: 18px; height: 36px; color: #303030; }
.dot { width: 30px; height: 30px; box-sizing: border-box; border-radius: 50%; border: 2px solid #adadad; background: #fff; flex: none; }
.dot--on { border: 8px solid #303030; }
.btn {
  margin-top: 17px;
  display: block;
  width: 136px; height: 52px;
  box-sizing: border-box;
  background: #fff;
  border: 2px solid #dcdcdc;
  border-bottom-color: #adadad;
  border-radius: 16px;
  box-shadow: 0 1px 1px rgba(0, 0, 0, .08);
  font-size: 22.700px;
  font-weight: 500;
  color: #303030;
  padding: 0;
}
.card--hl { background: #fcfcfc; border: 0; box-shadow: inset 0 0 0 6px #000; padding: 31px 30px 32px; }
.col-r .card--hl { border-radius: 20px; margin-right: -1px; }

/* wide stack, screen 2 */
.wide-stack { margin-left: 332px; width: 1811px; display: flex; flex-direction: column; gap: 29px; }
.card--wide { padding-top: 28px; padding-bottom: 28px; }
.card--wide .desc { margin-top: 25px; }
.card--wide .btn { margin-top: 25px; }
.card--wide.card--hl { margin-right: -3px; padding: 33px 29px 33px; }
.card--wide.card--hl .desc { margin-top: 24px; }

/* highlighted stack, screen 3 */
.hlbox { box-sizing: border-box; border: 6px solid #000; border-radius: 24px; display: flex; flex-direction: column; gap: 33px; }
.hlbox .card--a { padding: 26px 28px 28px; }
.hlbox .card--b { padding: 29px 28px 28px; }
.hlbox .card--c { padding: 29px 28px 38px; }
.field--gap { margin-top: 25px; }
.input--60 { height: 60px; }
.input--64 { height: 64.500px; margin-top: 9.500px; letter-spacing: .5px; }
.help { margin-top: 9px; line-height: 36px; color: #7a7a7a; }
.checkrow { display: flex; align-items: center; gap: 18px; height: 36px; margin-top: 32.500px; color: #303030; }
.cbx { width: 30px; height: 30px; margin-left: 2px; box-sizing: border-box; border: 2px solid #8a8a8a; border-radius: 7px; background: #fff; flex: none; }
.cbx--on { background: #303030; border-color: #303030; display: flex; align-items: center; justify-content: center; }
.tick { width: 24px; height: 24px; }
.pair--dates { margin-top: 25px; }
.picker { width: 22px; height: 24px; margin-left: 37px; fill: #111; color: #111; }
.picker--time { margin-left: 37px; }
.card--status { padding: 29px 29px 32px; }
.card--status .radios { margin-top: 31px; gap: 16px; }
.savebar { margin-top: 57px; margin-left: 326px; width: 1817px; display: flex; justify-content: flex-end; }
.btn-save {
  width: 137px; height: 52px;
  background: #404040;
  color: #fff;
  border: 3px solid #1f1f1f;
  border-top-color: #4f4f4f;
  border-radius: 14px;
  font-size: 22.700px;
  font-weight: 500;
  padding: 0;
}

/* pointer, drawn over the screens */
.cursor { position: absolute; width: 72px; height: 92px; }
.win--a .cursor { left: 2202px; top: 1382px; }
.win--b .cursor { left: 2651px; top: 815px; }
.win--c .cursor { left: 2002px; top: 1075px; }
```
